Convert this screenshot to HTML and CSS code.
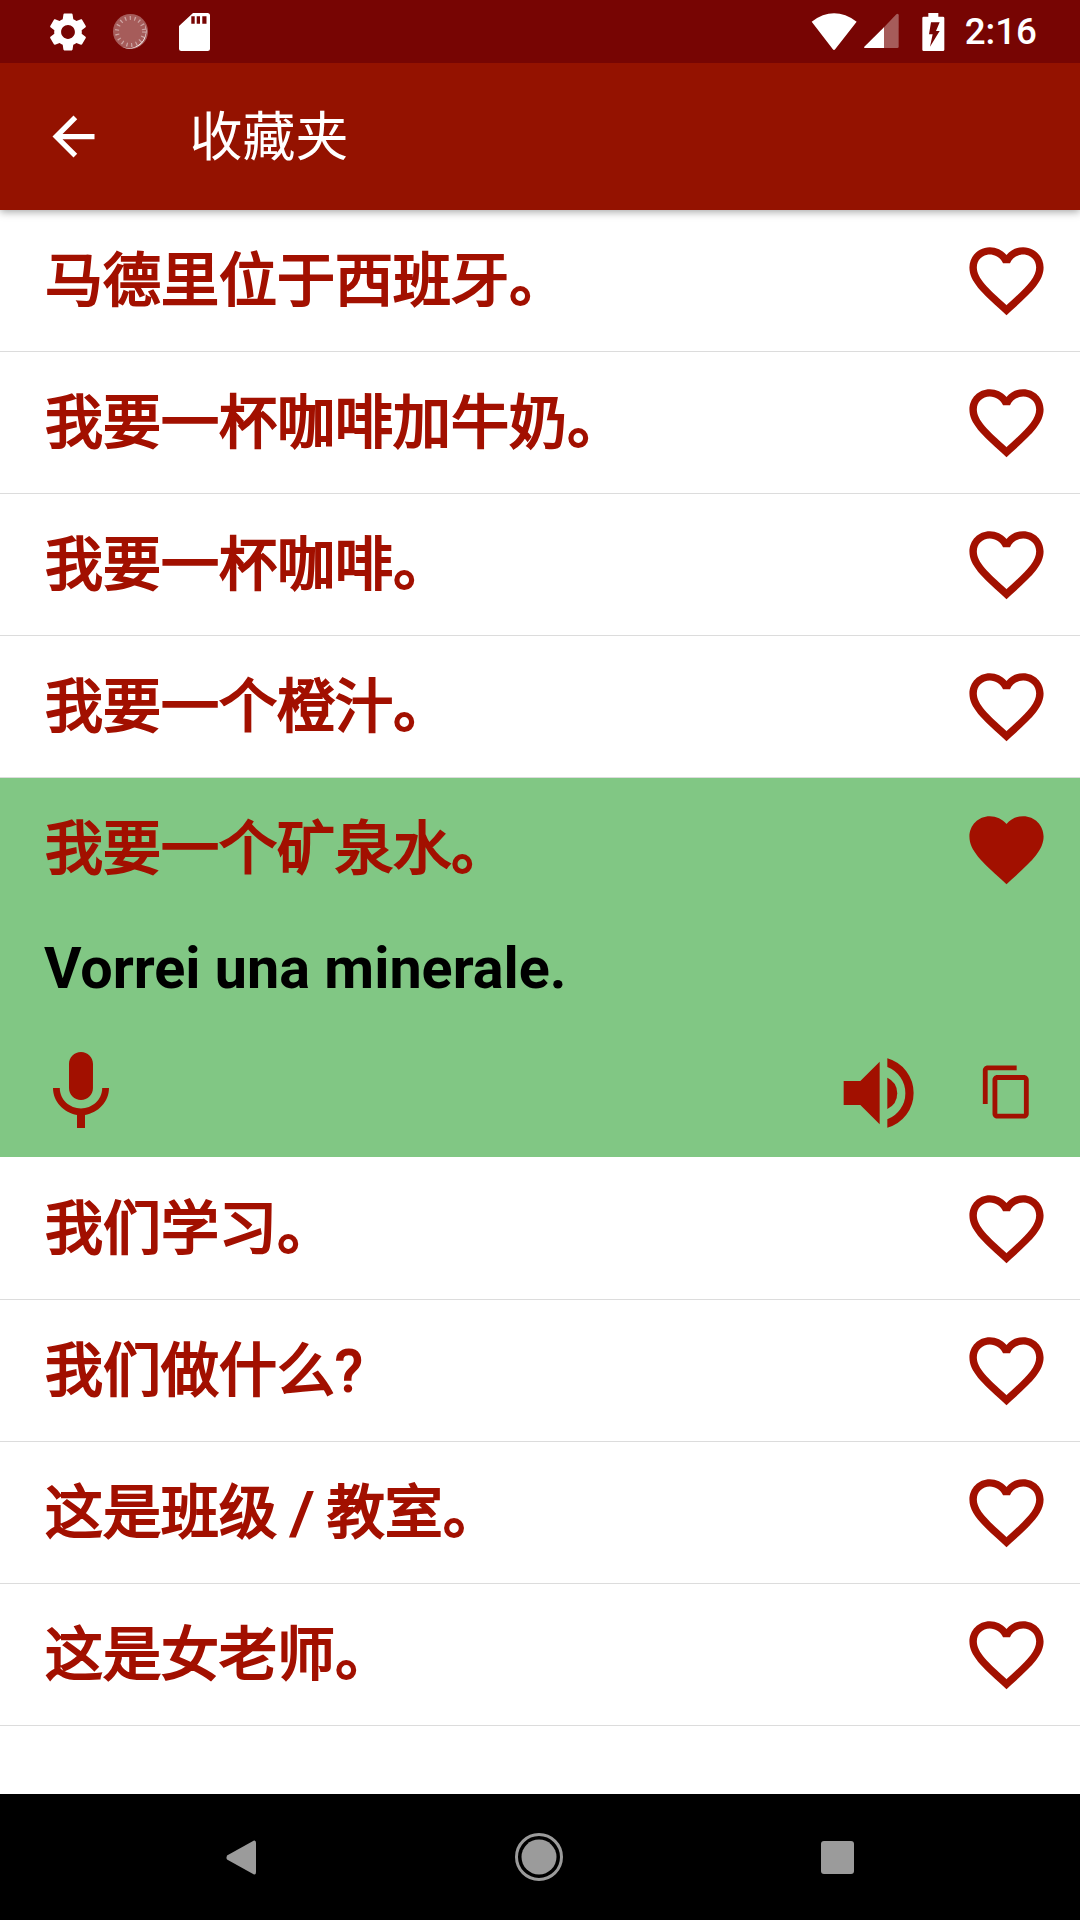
FILE: index.html
```html
<!DOCTYPE html>
<html lang="zh-CN">
<head>
<meta charset="utf-8">
<title>收藏夹</title>
<link rel="stylesheet" href="styles.css">
</head>
<body>
<svg class="defs" width="0" height="0">
  <defs>
    <symbol id="heart-o" viewBox="0 0 24 24"><path d="M16.5 3c-1.74 0-3.41.81-4.5 2.09C10.91 3.81 9.24 3 7.5 3 4.42 3 2 5.42 2 8.5c0 3.78 3.4 6.86 8.55 11.54L12 21.35l1.45-1.32C18.6 15.36 22 12.28 22 8.5 22 5.42 19.58 3 16.5 3zm-4.4 15.55l-.1.1-.1-.1C7.14 14.24 4 11.39 4 8.5 4 6.5 5.5 5 7.5 5c1.54 0 3.04.99 3.57 2.36h1.87C13.46 5.99 14.96 5 16.5 5c2 0 3.5 1.5 3.5 3.5 0 2.89-3.14 5.74-7.9 10.05z"/></symbol>
    <symbol id="heart-f" viewBox="0 0 24 24"><path d="M12 21.35l-1.45-1.32C5.4 15.36 2 12.28 2 8.5 2 5.42 4.42 3 7.5 3c1.74 0 3.41.81 4.5 2.09C13.09 3.81 14.76 3 16.5 3 19.58 3 22 5.42 22 8.5c0 3.78-3.4 6.86-8.55 11.54L12 21.35z"/></symbol>
  </defs>
</svg>
<div class="screen">
  <header class="top">
    <div class="status">
      <div class="status-left">
        <svg class="i-gear" viewBox="0 0 24 24"><path d="M19.14 12.94c.04-.3.06-.61.06-.94 0-.32-.02-.64-.07-.94l2.03-1.58c.18-.14.23-.41.12-.61l-1.92-3.32c-.12-.22-.37-.29-.59-.22l-2.39.96c-.5-.38-1.03-.7-1.62-.94l-.36-2.54c-.04-.24-.24-.41-.48-.41h-3.84c-.24 0-.43.17-.47.41l-.36 2.54c-.59.24-1.13.57-1.62.94l-2.39-.96c-.22-.08-.47 0-.59.22L2.74 8.87c-.12.21-.08.47.12.61l2.03 1.58c-.05.3-.09.63-.09.94s.02.64.07.94l-2.03 1.58c-.18.14-.23.41-.12.61l1.92 3.32c.12.22.37.29.59.22l2.39-.96c.5.38 1.03.7 1.62.94l.36 2.54c.05.24.24.41.48.41h3.84c.24 0 .44-.17.47-.41l.36-2.54c.59-.24 1.13-.56 1.62-.94l2.39.96c.22.08.47 0 .59-.22l1.92-3.32c.12-.22.07-.47-.12-.61l-2.01-1.58zM12 15.6c-1.98 0-3.6-1.62-3.6-3.6s1.62-3.6 3.6-3.6 3.6 1.62 3.6 3.6-1.62 3.6-3.6 3.6z"/></svg>
        <svg class="i-disc" viewBox="0 0 38 38">
          <circle cx="18.5" cy="18.5" r="17.5" class="dim"/>
          <circle cx="18.5" cy="18.5" r="13.5" class="ticks"/>
          <path class="crescent" d="M32 9.5A17.5 17.5 0 0 1 9 33.5 17 17 0 0 0 34 22 17 17 0 0 0 32 9.5z"/>
        </svg>
        <svg class="i-sd" viewBox="0 0 31 38"><path fill-rule="evenodd" d="M14 0H28.5A2.5 2.5 0 0 1 31 2.5V35.5A2.5 2.5 0 0 1 28.5 38H2.5A2.5 2.5 0 0 1 0 35.5V13ZM12.3 3.3V10.7H15.7V3.3ZM17.7 3.3V10.7H21V3.3ZM23.3 3.3V10.7H27.5V3.3Z"/></svg>
      </div>
      <div class="status-right">
        <svg class="i-wifi" viewBox="150 30 150 125"><path d="M158 62Q225 12 293 62L229 144Q225 150 221 144Z"/></svg>
        <svg class="i-signal" viewBox="310 40 115 115">
          <path d="M376 148H319Q314 148 317 144L376 86Z"/>
          <path class="dim" d="M376 86L413 47Q420 42 420 50V144Q420 148 416 148H376Z"/>
        </svg>
        <svg class="i-batt" viewBox="485 30 75 125">
          <path d="M507 36H537V47H551Q555 47 555 51V146Q555 150 551 150H493Q489 150 489 146V51Q489 47 493 47H507Z"/>
          <path class="bolt" d="M515 64H541L530 90H541L512 137L520 100H509Z"/>
        </svg>
        <span class="clock">2:16</span>
      </div>
    </div>
    <div class="toolbar">
      <svg class="i-back" viewBox="0 0 24 24"><path d="M20 11H7.83l5.59-5.59L12 4l-8 8 8 8 1.41-1.41L7.83 13H20v-2z"/></svg>
      <h1 class="title">收藏夹</h1>
    </div>
  </header>

  <main class="list">
    <div class="row"><span class="phrase">马德里位于西班牙。</span><svg class="heart"><use href="#heart-o"/></svg></div>
    <div class="row"><span class="phrase">我要一杯咖啡加牛奶。</span><svg class="heart"><use href="#heart-o"/></svg></div>
    <div class="row"><span class="phrase">我要一杯咖啡。</span><svg class="heart"><use href="#heart-o"/></svg></div>
    <div class="row"><span class="phrase">我要一个橙汁。</span><svg class="heart"><use href="#heart-o"/></svg></div>
    <section class="open">
      <div class="row row-open"><span class="phrase">我要一个矿泉水。</span><svg class="heart"><use href="#heart-f"/></svg></div>
      <p class="translation">Vorrei una minerale.</p>
      <div class="actions">
        <svg class="i-mic" viewBox="0 0 24 24"><path d="M12 14c1.66 0 2.99-1.34 2.99-3L15 5c0-1.66-1.34-3-3-3S9 3.34 9 5v6c0 1.66 1.34 3 3 3zm5.3-3c0 3-2.54 5.1-5.3 5.1S6.7 14 6.7 11H5c0 3.41 2.72 6.23 6 6.72V21h2v-3.28c3.28-.48 6-3.3 6-6.72h-1.7z"/></svg>
        <svg class="i-speaker" viewBox="60 820 230 225">
          <path d="M68 898H118L176 840V1028L118 970H68Z"/>
          <path d="M199 888A52 52 0 0 1 199 982Z"/>
          <path d="M199 830A108 108 0 0 1 199 1038V1013A84 84 0 0 0 199 856Z"/>
        </svg>
        <svg class="i-copy" viewBox="0 0 24 24"><path d="M16 1H4c-1.1 0-2 .9-2 2v14h2V3h12V1zm3 4H8c-1.1 0-2 .9-2 2v14c0 1.1.9 2 2 2h11c1.1 0 2-.9 2-2V7c0-1.1-.9-2-2-2zm0 16H8V7h11v14z"/></svg>
      </div>
    </section>
    <div class="row"><span class="phrase">我们学习。</span><svg class="heart"><use href="#heart-o"/></svg></div>
    <div class="row"><span class="phrase">我们做什么?</span><svg class="heart"><use href="#heart-o"/></svg></div>
    <div class="row"><span class="phrase">这是班级 / 教室。</span><svg class="heart"><use href="#heart-o"/></svg></div>
    <div class="row"><span class="phrase">这是女老师。</span><svg class="heart"><use href="#heart-o"/></svg></div>
  </main>

  <nav class="nav">
    <svg class="n-back" viewBox="0 0 30 35"><path d="M28 0.5Q30 0 30 3V32Q30 35 28 34.5L1 19.5Q0 17.5 1 15.5Z"/></svg>
    <svg class="n-home" viewBox="0 0 48 48"><circle cx="24" cy="24" r="22.5" class="ring"/><circle cx="24" cy="24" r="17.5"/></svg>
    <div class="n-recent"></div>
  </nav>
</div>
</body>
</html>
```

FILE: styles.css
```css
* { box-sizing: border-box; }
html, body { margin: 0; padding: 0; }
body { width: 1080px; height: 1920px; overflow: hidden; background: #fff; font-family: Roboto, "Noto Sans CJK SC", sans-serif; }
.defs { display: block; height: 0; }
.screen { display: flex; flex-direction: column; width: 1080px; height: 1920px; }

.top { position: relative; z-index: 2; box-shadow: 0 2px 8px rgba(0,0,0,.35); }
.status { display: flex; justify-content: space-between; align-items: center; height: 63px; background: #770503; color: #fff; fill: #fff; }
.status-left { display: flex; align-items: center; padding-left: 45px; }
.status-right { display: flex; align-items: center; padding-right: 43px; }
.i-gear { width: 46px; height: 46px; }
.i-disc { width: 38px; height: 38px; margin-left: 21px; }
.i-disc .dim { fill: rgba(255,255,255,.35); }
.i-disc .ticks { fill: none; stroke: rgba(255,255,255,.45); stroke-width: 4; stroke-dasharray: 1.2 3.6; }
.i-disc .crescent { fill: #fff; }
.i-sd { width: 31px; height: 38px; margin-left: 29px; }
.i-wifi { width: 50px; height: 41.67px; }
.i-signal { width: 38.33px; height: 38.33px; margin-left: 3px; }
.i-signal .dim { fill: rgba(255,255,255,.35); }
.i-batt { width: 25px; height: 41.67px; margin-left: 20px; }
.i-batt .bolt { fill: #770503; }
.clock { margin-left: 19px; font-size: 36.75px; font-weight: 500; line-height: 63px; }

.toolbar { display: flex; align-items: center; height: 147px; background: #941200; color: #fff; fill: #fff; padding-left: 42px; }
.i-back { width: 63px; height: 63px; }
.title { margin: 4px 0 0 84.5px; font-size: 53px; font-weight: 400; line-height: 1; }

.list { flex: 1; display: flex; flex-direction: column; }
.row { display: flex; align-items: center; justify-content: space-between; height: 142px; flex: none; padding: 0 29px 0 45px; border-bottom: 1.5px solid #dcdcdc; color: #a21000; fill: #a21000; }
.phrase { font-size: 58px; font-weight: 400; -webkit-text-stroke: 2.2px #a21000; word-spacing: -1.5px; line-height: 1.2; padding-top: 2px; white-space: pre; }
.heart { width: 89px; height: 89px; flex: none; }
.open { display: flex; flex-direction: column; flex: none; height: 379px; margin-bottom: 1px; background: #81c784; fill: #a21000; }
.row-open { border-bottom: 0; }
.translation { margin: 0; padding: 14px 0 0 44px; font-size: 57.5px; font-weight: 700; line-height: 70px; color: #000; height: 124px; }
.actions { display: flex; align-items: center; padding: 0 44px 0 33px; height: 96px; }
.i-mic { width: 96px; height: 96px; }
.i-speaker { width: 76.67px; height: 75px; margin-left: auto; margin-right: -1.5px; }
.i-copy { width: 58px; height: 58px; margin-left: 62px; }

.nav { display: flex; align-items: center; justify-content: space-between; height: 126px; flex: none; background: #000; fill: #9b9b9b; padding: 0 226px; }
.n-back { width: 30px; height: 35px; }
.n-home { width: 48px; height: 48px; }
.n-home .ring { fill: none; stroke: #9b9b9b; stroke-width: 3; }
.n-recent { width: 33px; height: 33px; border-radius: 3px; background: #9b9b9b; }
```
